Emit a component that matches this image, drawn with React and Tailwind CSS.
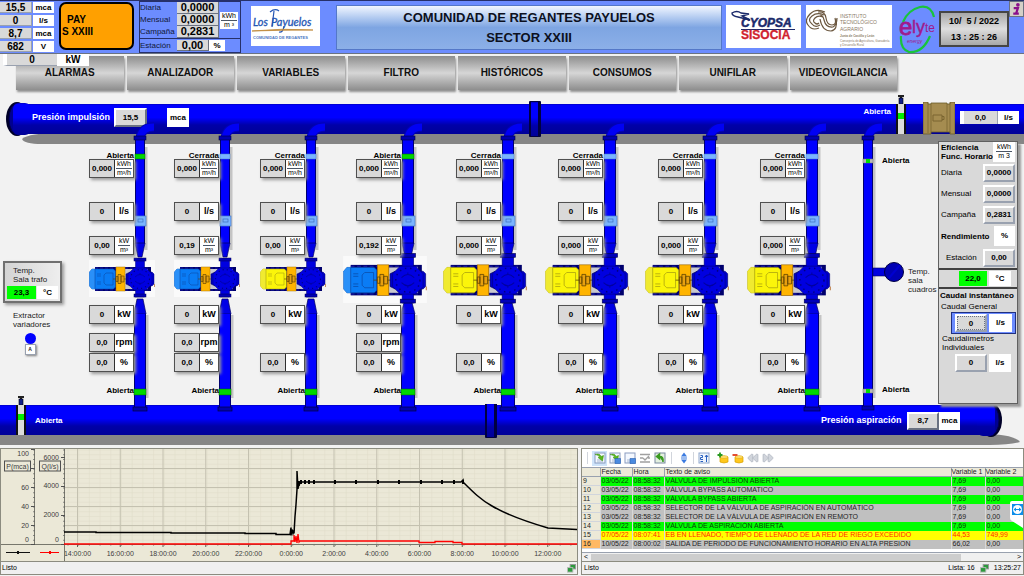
import React from 'react';
import { Rewind, FastForward } from 'lucide-react';

const NAV = ['ALARMAS', 'ANALIZADOR', 'VARIABLES', 'FILTRO', 'HISTÓRICOS', 'CONSUMOS', 'UNIFILAR', 'VIDEOVIGILANCIA'];

const PUMPS = [
  { valve: 'Abierta', energy: '0,000', ratio: '0,00', rpm: '0,0', running: true },
  { valve: 'Cerrada', energy: '0,000', ratio: '0,19', rpm: '0,0', running: true },
  { valve: 'Cerrada', energy: '0,000', ratio: '0,00' },
  { valve: 'Abierta', energy: '0,000', ratio: '0,192', rpm: '0,0', running: true, large: true },
  { valve: 'Cerrada', energy: '0,000', ratio: '0,000', large: true },
  { valve: 'Cerrada', energy: '0,000', ratio: '0,000', large: true },
  { valve: 'Cerrada', energy: '0,000', ratio: '0,000', large: true },
  { valve: 'Cerrada', energy: '0,000', ratio: '0,000', large: true },
];

const ALARMS = [
  [9, '03/05/22', '08:58:32', 'VÁLVULA DE IMPULSIÓN ABIERTA', '7,69', '0,00', 'green'],
  [10, '03/05/22', '08:58:32', 'VÁLVULA BYPASS AUTOMATICO', '7,69', '0,00', 'gray'],
  [11, '03/05/22', '08:58:32', 'VÁLVULA BYPASS ABIERTA', '7,69', '0,00', 'green'],
  [12, '03/05/22', '08:58:32', 'SELECTOR DE LA VÁLVULA DE ASPIRACIÓN EN AUTOMÁTICO', '7,69', '0,00', 'gray'],
  [13, '03/05/22', '08:58:32', 'SELECTOR DE LA VÁLVULA DE ASPIRACIÓN EN REMOTO', '7,69', '0,00', 'gray'],
  [14, '03/05/22', '08:58:32', 'VÁLVULA DE ASPIRACIÓN ABIERTA', '7,69', '0,00', 'green'],
  [15, '07/05/22', '08:07:41', 'EB EN LLENADO, TIEMPO DE LLENADO DE LA RED DE RIEGO EXCEDIDO', '44,53', '749,99', 'yellow'],
  [16, '10/05/22', '08:00:02', 'SALIDA DE PERIODO DE FUNCIONAMIENTO HORARIO EN ALTA PRESION', '66,02', '0,00', 'gray'],
];

const ROW_COLORS = {
  green: 'bg-[#00ff00] text-[#083c08]',
  gray: 'bg-[#c0c0c0] text-[#222222]',
  yellow: 'bg-[#ffff00] text-[#ff2a00]',
};

function Fraction({ top, bottom }) {
  return (
    <span className="flex flex-col items-center text-[7px] leading-[8px] font-normal">
      <span className="border-b border-gray-600 px-px">{top}</span>
      <span>{bottom}</span>
    </span>
  );
}

/* ---------- Header ---------- */

function HeaderReadouts() {
  const rows = [['15,5', 'mca'], ['0', 'l/s'], ['8,7', 'mca'], ['682', 'V']];
  return (
    <div className="flex flex-col gap-[2px] w-[54px]">
      {rows.map(([value, unit], i) => (
        <div key={i} className="flex gap-px h-[11px] font-bold">
          <output className="w-8 bg-[#d9d9d9] border-r border-b border-gray-400 text-[10px] leading-[11px] text-center">{value}</output>
          <span className="grow bg-white text-[8px] leading-[11px] text-center">{unit}</span>
        </div>
      ))}
    </div>
  );
}

function EnergyTable() {
  const rows = [['Diaria', '0,0000'], ['Mensual', '0,0000'], ['Campaña', '0,2831']];
  return (
    <div className="ml-[5px] w-[102px] flex flex-col">
      <div className="flex items-center h-[38px] border border-[#26306a]">
        <div className="flex flex-col">
          {rows.map(([label, value]) => (
            <div key={label} className="flex h-3">
              <span className="w-[37px] text-[8px] leading-3 text-[#101838]">{label}</span>
              <output className="w-[42px] bg-[#d9d9d9] border-r border-b border-gray-500 text-[11px] leading-[11px] font-bold text-center">{value}</output>
            </div>
          ))}
        </div>
        <span className="ml-px bg-white w-[18px]"><Fraction top="kWh" bottom="m ³" /></span>
      </div>
      <div className="flex items-center h-[14px] border border-t-0 border-[#26306a]">
        <span className="w-[37px] text-[8px] text-[#101838]">Estación</span>
        <output className="w-8 h-[11px] bg-[#d9d9d9] border-r border-b border-gray-500 text-[11px] leading-[11px] font-bold text-center">0,00</output>
        <span className="w-4 h-[11px] bg-white text-[8px] leading-[11px] font-bold text-center">%</span>
      </div>
    </div>
  );
}

function PayuelosLogo() {
  return (
    <svg viewBox="0 0 69 40" className="ml-2.5 mt-[5px] w-[69px] h-10 shrink-0 bg-white" aria-label="Los Payuelos">
      <g fontFamily="Lato" fontStyle="italic" fill="#2456b4" stroke="#2456b4" strokeWidth=".3">
        <text x="2" y="20" fontSize="11">Los</text>
        <text x="20" y="20" fontSize="11">Payuelos</text>
      </g>
      <path d="M19 6q5-4 9-1M23 5l-2 16M33 20q-1 7-5 6" fill="none" stroke="#2456b4" strokeWidth="1.2" />
      <path d="M1 25q30-3 61-1q-30 0-61 1" fill="#c08a3c" stroke="#c08a3c" strokeWidth=".8" />
      <text x="2" y="33" fontFamily="Liberation Sans" fontSize="4" fontWeight="bold" fill="#4a78c4">COMUNIDAD DE REGANTES</text>
    </svg>
  );
}

function CyopsaLogo() {
  return (
    <svg viewBox="0 0 75 43" className="w-[75px] h-[43px] shrink-0 bg-white" aria-label="Cyopsa Sisocia">
      <path d="M6 8q5-3 9 0l8 1-7 2 8 4-12-3q-6-1-6-4Z" fill="none" stroke="#1b2a6b" strokeWidth="1.4" />
      <text x="15" y="22" fontFamily="Liberation Sans" fontSize="12" fontWeight="bold" fontStyle="italic" fill="#1b2a6b" stroke="#1b2a6b" strokeWidth=".5">CYOPSA</text>
      <path d="M15 24.500h54" stroke="#1b2a6b" strokeWidth="1" />
      <text x="15" y="34" fontFamily="Liberation Sans" fontSize="12" fontWeight="bold" fill="#d0222e" stroke="#d0222e" strokeWidth=".3">SISOCIA</text>
    </svg>
  );
}

function ItaLogo() {
  return (
    <svg viewBox="0 0 86 43" className="ml-[5px] w-[86px] h-[43px] shrink-0 bg-white" aria-label="Instituto Tecnológico Agrario">
      <g fill="none" stroke="#6b573f" strokeWidth="1.2">
        <path d="M19 7Q10 3 4 9T2 20q4 6 11 3" />
        <path d="M18 10Q11 7 6 11t0 8q3 4 8 1" />
        <path d="M17 12q-5-2-8 1t0 5q2 2 4 0" />
        <path d="M12 7q7-1 8 6t6 7 3-7" />
        <path d="M14 10q3 0 4 5 2 8 9 7 4-2 4-9" />
        <path d="M14 14q2 12 11 12 7-1 5-12" />
      </g>
      <g fontFamily="Liberation Sans" fill="#8a7a66">
        <text x="34" y="13" fontSize="5">INSTITUTO</text>
        <text x="34" y="19" fontSize="5">TECNOLÓGICO</text>
        <text x="34" y="26" fontSize="5">AGRARIO</text>
        <text x="34" y="32" fontSize="3" fontWeight="bold">Junta de Castilla y León</text>
        <text x="34" y="37" fontSize="3">Consejería de Agricultura, Ganadería</text>
        <text x="34" y="41" fontSize="3">y Desarrollo Rural</text>
      </g>
    </svg>
  );
}

function ElyteLogo() {
  return (
    <svg viewBox="0 0 38 49" className="ml-[7px] w-[38px] h-[49px] shrink-0" aria-label="Elyte">
      <path d="M35 12Q32 0 21 2Q9 5 4 17M2 31q-1 13 8 16q14 1 21-16" fill="none" stroke="#19c43c" strokeWidth="2.2" />
      <text x="0" y="30" fontFamily="Liberation Sans" fontSize="24" fill="#a01a8c" stroke="#a01a8c" strokeWidth=".8">e</text>
      <text x="13" y="28" fontFamily="Liberation Sans" fontSize="18" fill="#a01a8c" stroke="#a01a8c" strokeWidth=".4">ly</text>
      <text x="26" y="27" fontFamily="Liberation Sans" fontSize="12" fill="#a01a8c">te</text>
      <text x="8" y="38" fontFamily="Liberation Sans" fontSize="5" fontStyle="italic" fill="#a01a8c">energy</text>
    </svg>
  );
}

function Header() {
  return (
    <header className="flex h-[54px] border-t border-b border-t-[#26306a] border-b-gray-500 bg-[#6c8cff]">
      <div className="pt-px"><HeaderReadouts /></div>
      <button className="ml-[5px] mt-px h-12 w-[75px] shrink-0 rounded-[7px] border-2 border-black bg-[#ffa000] px-px text-left text-[10px] leading-3 font-bold">
        <span className="block pl-[5px]">PAY</span>
        <span className="block">S XXIII</span>
      </button>
      <EnergyTable />
      <PayuelosLogo />
      <h1 className="ml-4 mt-1 h-[45px] grow border border-[#5478c8] bg-linear-to-b from-[#f2f7ff] via-[#7ea5e2] to-[#8cb0e8] text-center text-[13px] leading-5 font-bold pt-[2px] text-[#0c1020]">
        COMUNIDAD DE REGANTES PAYUELOS<br />SECTOR XXIII
      </h1>
      <div className="flex pl-1 pt-1">
        <CyopsaLogo />
        <ItaLogo />
        <ElyteLogo />
      </div>
      <div className="ml-[2px] mt-[10px] h-9 w-[70px] shrink-0 border-2 border-[#454545] bg-linear-to-b from-[#a8a8a8] via-[#dedede] to-[#a8a8a8] text-center text-[9px] leading-4 font-bold">
        <time className="block whitespace-pre">10/  5 / 2022</time>
        <time className="block">13 : 25 : 26</time>
      </div>
      <button aria-label="Información" className="h-4 w-[15px] shrink-0 border border-gray-500 bg-[#d4d0c8]">
        <svg viewBox="0 0 14 14" className="w-full h-full">
          <circle cx="8.500" cy="2.500" r="2" fill="#8a0f8a" />
          <path d="M4 6h4.500l-2 6h3M3.500 12h3" fill="none" stroke="#8a0f8a" strokeWidth="2.400" />
        </svg>
      </button>
    </header>
  );
}

function Nav() {
  return (
    <nav className="relative grid grid-cols-8 gap-[3px] pl-4 pr-[127px] pt-[2px] pb-[5px]">
      {NAV.map((item) => (
        <button key={item} className="h-[34px] bg-linear-to-b from-[#8e8e8e] via-[#d6d6d6] to-[#8e8e8e] pb-[2px] text-[10px] font-bold text-[#101010] shadow-[1px_2px_2px_#909090]">
          {item}
        </button>
      ))}
      {/* Total power, overlaps the first button */}
      <div className="absolute left-[3px] top-0 flex h-3 text-[10px] leading-3 font-bold text-center">
        <output className="w-[54px] border-l-4 border-b border-l-white border-b-gray-400 bg-[#d9d9d9]">0</output>
        <span className="w-8 bg-white">kW</span>
      </div>
    </nav>
  );
}

/* ---------- Plant mimic ---------- */

function PipeGradient({ id }) {
  return (
    <linearGradient id={id} x1="0" y1="0" x2="0" y2="1">
      <stop offset="0" stopColor="#0000c0" />
      <stop offset="0.05" stopColor="#0000ff" />
      <stop offset="0.45" stopColor="#0000ff" />
      <stop offset="0.7" stopColor="#0000a8" />
      <stop offset="1" stopColor="#000098" />
    </linearGradient>
  );
}

function MainPipe({ id, top, shadowFrom, shadowTo, flange, coupling, start, end }) {
  const left = flange < 512;
  return (
    <svg viewBox="0 0 1024 52" preserveAspectRatio="none" className="absolute inset-x-0 top-0 h-[52px] w-full">
      <defs><PipeGradient id={id} /></defs>
      <path d={`M${shadowFrom} ${top + 35}q6-6 40-6H${shadowTo - 40}q34 0 40 8q-10 3-30 3H${shadowFrom + 20}q-18 0-20-5Z`} fill="#868686" />
      <rect x={start} y={top} width={end - start} height="30" fill={`url(#${id})`} />
      <rect x={coupling} y={top - 3} width="12" height="36" rx="1" fill="#000040" />
      <rect x={coupling + 2} y={top - 2} width="7" height="34" fill={`url(#${id})`} />
      <ellipse cx={flange} cy={top + 15} rx="11" ry="17" fill="#000028" />
      <ellipse cx={left ? flange + 1 : flange - 1} cy={top + 15} rx="9" ry="16" fill="#000090" stroke="#000050" />
      <rect x={left ? flange - 4 : flange - 14} y={top - 1} width="18" height="32" rx="6" fill={`url(#${id})`} />
    </svg>
  );
}

function GateValve() {
  return (
    <svg viewBox="0 0 12 40" className="h-10 w-3 shrink-0">
      <path d="M3 1h6M6 1v3" stroke="#222" strokeWidth="2" />
      <rect x="4" y="3" width="4" height="6" fill="#10208a" stroke="#000" strokeWidth=".6" />
      <rect x="1" y="9" width="10" height="30" fill="#111" />
      <rect x="3" y="9" width="6" height="30" fill="#dcdcdc" />
      <rect x="3" y="18" width="6" height="6" fill="#00f000" />
    </svg>
  );
}

function FlowMeter() {
  return (
    <svg viewBox="0 0 32 33" className="h-[33px] w-8 shrink-0">
      <path d="M0 0h5v2h3v-1h16v1h3v-2h5v32h-5v-2h-19v2h-8Z" fill="#a58c50" stroke="#6b5a2a" strokeWidth=".8" />
      <path d="M5 1v30M8 2v28M24 2v28M27 1v30" stroke="#7a6530" strokeWidth=".8" />
      <path d="M10 13h9v6h-9ZM19 14.500h2v3h-2" fill="none" stroke="#7a6530" />
    </svg>
  );
}

function Pump({ running, x, y, width, height }) {
  const body = running ? '#0a7cf5' : '#fbf50a';
  const cap = running ? '#2a90f8' : '#f0ea30';
  const line = running ? '#0a4ca8' : '#a8a010';
  return (
    <svg x={x} y={y} width={width} height={height} viewBox="0 0 66 37" overflow="visible">
      {running && <rect width="66" height="37" fill="#fafafa" />}
      <rect x="6" y="7" width="56" height="24" fill="#00006c" />
      <rect x="36" y="9" width="10" height="20" fill="#c8c8d0" />
      <rect x="56" y="9" width="3" height="20" fill="#e0e0e8" />
      <path d="M6 8h55M6 30h55" stroke="#1c1cb0" strokeDasharray="3 2" strokeWidth=".8" />
      {/* motor */}
      <path d="M3 9h21.500l2 2v16l-2 2H3l-2.500-3V12Z" fill={body} stroke={line} strokeWidth=".5" />
      <path d="M3 9h3v20H3l-2.500-3V12Z" fill={cap} />
      <path d="M6 9v20M8 14h4M8 16h4M8 22h4M8 24h4M15 15l2-2h7v12h-7l-2-2Z" fill="none" stroke={line} strokeWidth=".6" />
      {/* coupling */}
      <rect x="27" y="7" width="9" height="24" fill="#ffb400" stroke="#b07800" strokeWidth=".5" />
      <path d="M24 19h3M27 16.500h2v5h-2ZM29 14.500h3v9h-3ZM32 16h3v6h-3ZM35 19h4" fill="#e8a010" stroke="#5a4000" strokeWidth=".6" />
      {/* casing */}
      <path d="M37 14l4-2v14l-4-2Z" fill="#0000c8" stroke="#000050" strokeWidth=".5" />
      <rect x="46.500" y="0" width="9" height="37" fill="#0000e0" stroke="#000080" strokeWidth=".5" />
      <path d="M61 12h2l2 2v10l-2 2h-2Z" fill="#0000d0" stroke="#000070" strokeWidth=".5" />
      <rect x="58" y="13" width="4" height="12" fill="#0000d0" />
      <path d="M65.500 24v3" stroke="#b8743a" strokeWidth=".8" />
      <path d="M45 8h12l6 6v10l-6 6H45l-6-6V14Z" fill="#0000e0" stroke="#000080" strokeWidth=".5" />
      <circle cx="51" cy="19" r="9.500" fill="none" stroke="#000080" strokeWidth="1.200" strokeDasharray="1.200 3" />
      <path d="M51 13v1.500M51 23.500v1.500M46 17q5-5 10 0M46 21q5 5 10 0" fill="none" stroke="#0000a0" strokeWidth=".8" />
      <rect x="45" y="-2" width="12" height="3" fill="#0000b8" stroke="#000050" strokeWidth=".5" />
      <rect x="45" y="34" width="12" height="3" fill="#0000b8" stroke="#000050" strokeWidth=".5" />
    </svg>
  );
}

/* Riser from the suction pipe, through the pump, up to the discharge pipe */
function Riser({ large, open, running }) {
  const cx = large ? 52 : 51;
  const r = large ? 6 : 5;
  const low = large ? 7 : 6;
  return (
    <svg viewBox="0 141 80 263" className="absolute left-0 top-0 h-[263px] w-20 overflow-visible">
      <path d={`M${cx + r + 1} 147V250M${cx + low + 1} 315V398`} stroke="#c4c4c4" strokeWidth="3" />
      <path d={`M${cx + 14} 127Q${cx + 2} 127 ${cx} 138`} fill="none" stroke="#0000b8" strokeWidth="9" />
      <path d={`M${cx + 14} 127Q${cx + 2} 127 ${cx} 138`} fill="none" stroke="#0000f4" strokeWidth="7" />
      <rect x={cx - r} y="139" width={r * 2} height="105" fill="#000070" />
      <rect x={cx - r + 1} y="139" width={r * 2 - 2} height="105" fill="#0000ff" />
      <rect x={cx - r - 1} y="136" width={r * 2 + 2} height="4" fill="#0000b0" stroke="#000040" strokeWidth=".6" />
      <path d={`M${cx - r} 243h${r * 2}l-3 14h${6 - r * 2}Z`} fill="#0000e6" stroke="#000060" strokeWidth=".7" />
      <rect x={cx - r} y="154" width={r * 2} height="5" fill={open ? '#00d800' : '#7ab4ff'} stroke={open ? '#006000' : '#4a7cc8'} strokeWidth=".5" />
      <rect x={cx - r} y="216" width={r * 2 + 1} height="10" fill="#7ab4ff" stroke="#4a7cc8" strokeWidth=".7" />
      <rect x={cx - 2} y="219" width="5" height="3" fill="none" stroke="#3c70c0" strokeWidth=".7" />
      <path d={`M${cx - 3} 299h6l${low - 3} 15h${-low * 2}Z`} fill="#0000e6" stroke="#000060" strokeWidth=".7" />
      <rect x={cx - low} y="314" width={low * 2} height="94" fill="#000070" />
      <rect x={cx - low + 1} y="314" width={low * 2 - 2} height="94" fill="#0000ff" />
      <rect x={cx - low} y="389" width={low * 2} height="6" fill="#00d800" stroke="#006000" strokeWidth=".5" />
      <rect x={cx - low - 1} y="407" width={low * 2 + 2} height="4" fill="#0000b0" stroke="#000040" strokeWidth=".7" />
      {large
        ? <Pump running={running} x={-13} y={256} width={84} height={47} />
        : <Pump running={running} x={0} y={260} width={66} height={37} />}
    </svg>
  );
}

function Readout({ value, children }) {
  return (
    <div className="flex h-[19px] border border-[#505050] bg-white text-center font-bold shadow-[2px_2px_3px_#9a9a9a]">
      <output className="w-[25px] border-r border-[#303030] bg-[#d9d9d9] text-[8px] leading-[17px]">{value}</output>
      <span className="grow text-[9px] leading-[17px]">{children}</span>
    </div>
  );
}

function PumpLine({ pump }) {
  return (
    <div className="relative pt-[10px]">
      <Riser large={pump.large} open={pump.valve === 'Abierta'} running={pump.running} />
      <div className="relative flex w-[45px] flex-col">
        <span className="h-2 self-end text-[8px] leading-[9px] font-bold">{pump.valve}</span>
        <Readout value={pump.energy}><Fraction top="kWh" bottom="m³/h" /></Readout>
        <div className="mt-6"><Readout value="0">l/s</Readout></div>
        <div className="mt-[15px]"><Readout value={pump.ratio}><Fraction top="kW" bottom="m³" /></Readout></div>
        <div className="mt-[50px]"><Readout value="0">kW</Readout></div>
        <div className="mt-[9px] h-[19px]">{pump.rpm && <Readout value={pump.rpm}>rpm</Readout>}</div>
        <div className="mt-px"><Readout value="0,0">%</Readout></div>
        <span className="mt-[14px] h-2 self-end text-[8px] leading-[9px] font-bold">Abierta</span>
      </div>
    </div>
  );
}

function TransformerRoom() {
  return (
    <div className="flex flex-col pl-[3px] pt-[120px] text-[8px] leading-[9px] text-[#222222]">
      <div className="w-[59px] border-2 border-[#707070] bg-linear-to-r from-[#d4d4d4] to-[#eeeeee] px-[2px] pb-[2px] pt-[3px] shadow-[2px_2px_3px_#9a9a9a]">
        <p className="pl-[6px]">Temp.<br />Sala trafo</p>
        <div className="mt-[2px] flex h-[13px] gap-px text-center leading-[13px] font-bold text-black">
          <output className="w-[29px] bg-[#00ff00]">23,3</output>
          <span className="grow bg-white">°C</span>
        </div>
      </div>
      <p className="mt-2 pl-[10px]">Extractor<br />variadores</p>
      <div className="flex w-[54px] flex-col items-center pt-1">
        <span className="h-[11px] w-[11px] rounded-full bg-[#0000ff]"></span>
        <button className="h-[11px] w-[11px] border border-gray-400 bg-white text-[5px] leading-[9px] font-bold shadow-[1px_1px_2px_#808080]">A</button>
      </div>
    </div>
  );
}

function Bypass() {
  return (
    <div className="relative pt-[15px] text-[8px] leading-[9px]">
      <svg viewBox="0 141 78 263" className="absolute left-0 top-0 h-[263px] w-[78px] overflow-visible">
        <path d="M14 147V398" stroke="#c4c4c4" strokeWidth="3" />
        <path d="M22 127Q10 127 8 138" fill="none" stroke="#0000b8" strokeWidth="9" />
        <path d="M22 127Q10 127 8 138" fill="none" stroke="#0000f4" strokeWidth="7" />
        <rect x="3" y="139" width="10" height="269" fill="#000070" />
        <rect x="4" y="139" width="8" height="269" fill="#0000ff" />
        <rect x="2" y="136" width="12" height="4" fill="#0000b0" stroke="#000040" strokeWidth=".6" />
        <rect x="2" y="406" width="12" height="4" fill="#0000b0" stroke="#000040" strokeWidth=".6" />
        <rect x="13" y="268" width="14" height="8" fill="#0000e0" stroke="#000060" strokeWidth=".6" />
        <circle cx="34" cy="272" r="9.500" fill="#0000b4" stroke="#000040" />
        <path d="M29 278L40 265" stroke="#0000d0" strokeWidth="2" />
        {[159, 389].map((y) => (
          <g key={y}>
            <rect x="3" y={y} width="10" height="4" fill="#b8b8b8" stroke="#707070" strokeWidth=".5" />
            <rect x="6" y={y} width="4" height="4" fill="#00e000" />
          </g>
        ))}
      </svg>
      <p className="relative pl-[22px] font-bold">Abierta</p>
      <p className="relative mt-[102px] pl-[48px] text-[#222222]">Temp.<br />sala<br />cuadros</p>
      <p className="relative mt-[91px] pl-[22px] font-bold">Abierta</p>
    </div>
  );
}

function PanelValue({ children }) {
  return (
    <output className="block h-[18px] w-8 border-2 border-t-white border-l-white border-r-gray-400 border-b-gray-400 bg-[#d9d9d9] text-center text-[8px] leading-[14px] font-bold">
      {children}
    </output>
  );
}

function EfficiencyPanel() {
  const rows = [['Diaria', '0,0000'], ['Mensual', '0,0000'], ['Campaña', '0,2831']];
  return (
    <aside className="h-[263px] border border-[#606060] bg-[#d9d9d9] text-[8px] leading-[9px] shadow-[3px_3px_2px_#9a9a9a]">
      <div className="flex h-5 items-start">
        <h2 className="w-[53px] whitespace-nowrap pl-[2px] pt-px font-bold">Eficiencia<br />Func. Horario</h2>
        <span className="relative ml-px h-5 w-[22px] bg-white pt-px"><Fraction top="kWh" bottom="m 3" /></span>
      </div>
      {rows.map(([label, value]) => (
        <div key={label} className="flex h-[21px] items-center justify-between pl-[2px] pr-[2px]">
          <span>{label}</span>
          <PanelValue>{value}</PanelValue>
        </div>
      ))}
      <div className="flex h-[22px] items-center justify-between pl-[2px] pr-[2px] font-bold">
        <h2>Rendimiento</h2>
        <span className="h-5 w-[21px] bg-white text-center leading-5">%</span>
      </div>
      <div className="flex h-[23px] items-center justify-between border-b-2 border-[#404040] pl-[7px] pr-[2px]">
        <span>Estación</span>
        <PanelValue>0,00</PanelValue>
      </div>
      <div className="flex h-[19px] items-center gap-[2px] border-b-2 border-[#404040] pl-5 text-center leading-[15px] font-bold">
        <output className="h-[15px] w-7 bg-[#00ff00]">22,0</output>
        <span className="h-[15px] w-[22px] bg-white">°C</span>
      </div>
      <h2 className="whitespace-nowrap pl-px pt-[2px] font-bold">Caudal instantáneo</h2>
      <p className="pl-[2px] pt-[2px]">Caudal General</p>
      <div className="ml-3 mt-px flex h-[22px] w-[65px] items-center gap-[2px] border border-[#203080] bg-[#6c8cff] px-[3px] font-bold">
        <button className="h-[18px] w-8 border-2 border-t-white border-l-white border-r-gray-400 border-b-gray-400 bg-[#d9d9d9] text-center outline-1 -outline-offset-3 outline-dotted outline-gray-500">0</button>
        <span className="h-[18px] grow bg-white text-center leading-[18px]">l/s</span>
      </div>
      <p className="pl-[3px]">Caudalímetros<br />Individuales</p>
      <div className="ml-4 mt-[2px] flex gap-[2px] font-bold">
        <PanelValue>0</PanelValue>
        <span className="h-[18px] w-[22px] bg-white text-center leading-[18px]">l/s</span>
      </div>
    </aside>
  );
}

function Plant() {
  return (
    <main className="text-[8px]">
      <div className="relative flex h-[46px] items-start">
        <MainPipe id="discharge" top={9} start={20} end={1024} shadowFrom={22} shadowTo={1070} flange={17} coupling={529} />
        <div className="relative flex grow items-center pl-8 pt-[13px] font-bold">
          <span className="w-[82px] text-[9px] whitespace-nowrap text-white">Presión impulsión</span>
          <output className="h-[19px] w-[33px] border-2 border-t-white border-l-white border-r-gray-500 border-b-gray-500 bg-[#d9d9d9] text-center leading-[15px]">15,5</output>
          <span className="ml-5 h-[19px] w-[22px] bg-white text-center leading-[19px]">mca</span>
        </div>
        <span className="relative mt-3 leading-[10px] font-bold text-white">Abierta</span>
        <div className="relative ml-[4px]"><GateValve /></div>
        <div className="relative ml-[16px] mt-[7px]"><FlowMeter /></div>
        <div className="relative ml-[5px] mr-[5px] mt-4 flex h-[13px] bg-white text-center leading-[13px] font-bold">
          <output className="w-[38px] border-l-4 border-r border-l-white border-r-gray-400 bg-[#d9d9d9]">0,0</output>
          <span className="w-[21px]">l/s</span>
        </div>
      </div>

      <div className="relative z-10 grid h-[263px] grid-cols-[89fr_85fr_86fr_96fr_100fr_102fr_100fr_102fr_100fr_78fr_80fr_6fr]">
        <TransformerRoom />
        {PUMPS.map((pump, i) => <PumpLine key={i} pump={pump} />)}
        <Bypass />
        <EfficiencyPanel />
      </div>

      <div className="relative flex h-[43px] items-start font-bold">
        <MainPipe id="suction" top={1} start={0} end={992} shadowFrom={-60} shadowTo={1020} flange={991} coupling={485} />
        <div className="relative z-10 -mt-2 ml-[15px]"><GateValve /></div>
        <span className="relative ml-2 mt-3 leading-[10px] text-white">Abierta</span>
        <div className="relative ml-auto mr-16 mt-2 flex items-center text-white">
          <span className="w-[86px] text-[9px] whitespace-nowrap">Presión aspiración</span>
          <output className="h-[18px] w-8 border-2 border-t-white border-l-white border-r-gray-500 border-b-gray-500 bg-[#d9d9d9] text-center leading-[14px] text-black">8,7</output>
          <span className="h-[18px] w-[21px] bg-white text-center leading-[18px] text-black">mca</span>
        </div>
      </div>
    </main>
  );
}

/* ---------- Trend and alarm log ---------- */

function LinkIcon() {
  return (
    <svg viewBox="0 0 10 10" className="h-[9px] w-[9px]">
      <rect x="3.500" y=".5" width="6" height="5" fill="#2c9a3c" stroke="#999" />
      <rect x=".5" y="4" width="6" height="5" fill="#2c9a3c" stroke="#bbb" />
    </svg>
  );
}

const HOURS = ['14:00:00', '16:00:00', '18:00:00', '20:00:00', '22:00:00', '0:00:00', '2:00:00', '4:00:00', '6:00:00', '8:00:00', '10:00:00', '12:00:00'];

function TrendChart() {
  const minorX = Array.from({ length: 48 }, (_, i) => 67 + i * 10.7);
  const minorY = Array.from({ length: 20 }, (_, i) => 1 + i * 4.75);
  return (
    <section className="border border-[#8c8c80] bg-[#ebe8d7]">
      <svg viewBox="0 0 576 112" className="block w-full" fontFamily="Liberation Sans" fontSize="7" fill="#404040">
        {minorX.map((x) => <path key={x} d={`M${x} 0V95`} stroke="#e0ddcb" strokeWidth=".6" />)}
        {minorY.map((y) => <path key={y} d={`M63 ${y}H576`} stroke="#e0ddcb" strokeWidth=".6" />)}
        {[19, 38, 57, 76].map((y) => <path key={y} d={`M63 ${y}.5H576`} stroke="#c4c1b0" />)}
        {HOURS.map((h, i) => (
          <g key={h}>
            <path d={`M${76.5 + i * 42.75} 0V95`} stroke="#c4c1b0" />
            <path d={`M${76.5 + i * 42.75} 95v3`} stroke="#606058" />
            <text x={76.5 + i * 42.75} y="107" textAnchor="middle">{h}</text>
          </g>
        ))}
        {minorX.map((x) => <path key={x} d={`M${x} 95v2`} stroke="#808078" strokeWidth=".6" />)}
        <path d="M0 95.500H576M63.500 0V112M33.500 0V95" stroke="#77776c" />
        {[0, 19, 38, 57, 76, 95].map((y) => <path key={y} d={`M30 ${y}.5h4`} stroke="#505050" />)}
        {[8, 37, 66, 95].map((y) => <path key={y} d={`M60 ${y}.5h4`} stroke="#505050" />)}
        {minorY.map((y) => <path key={y} d={`M32 ${y}h2M62 ${y}h2`} stroke="#606060" strokeWidth=".7" />)}
        <g textAnchor="end">
          <text x="28" y="7">100</text>
          <text x="28" y="41">60</text>
          <text x="28" y="60">40</text>
          <text x="28" y="79">20</text>
          <text x="28" y="93">0</text>
          <text x="58" y="11">6000</text>
          <text x="58" y="39">4000</text>
          <text x="58" y="68">2000</text>
          <text x="58" y="93">0</text>
        </g>
        <rect x="3.500" y="12" width="26" height="10" fill="#ebe8d7" stroke="#505050" />
        <rect x="38.500" y="12" width="21" height="10" fill="#ebe8d7" stroke="#505050" />
        <text x="16.500" y="19.500" textAnchor="middle">P(mca)</text>
        <text x="49" y="19.500" textAnchor="middle">Q(l/s)</text>
        <path d="M5 103.500h24" stroke="#111" />
        <path d="M39 103.500h19" stroke="#f00" />
        <path d="M17 102v3" stroke="#111" strokeWidth="2" />
        <path d="M49 102v3" stroke="#f00" strokeWidth="2" />
        {/* flow */}
        <path d="M63 95H290V92h3v-6l1 7 1-6 1 7 1-9 1 8 1-1H418V93.500H434V92.500H452V93.500H461V95H576" fill="none" stroke="#f00" strokeWidth="1.300" />
        {/* pressure */}
        <path d="M63 83H95V83.500H170V84H244V84.500H275V85.500H289l1-7v8l1-6 1 4 1-3v3l1-17 1-12 1-15V22l1 18 1-8v5l1-4H460l2-2v2C472 43 480 51 491 57C508 67 530 74 547 79L576 80.500" fill="none" stroke="#000" strokeWidth="1.500" />
        {[299, 303, 307, 312, 333, 354, 376, 397, 419, 440, 452, 461].map((x) => (
          <rect key={x} x={x} y="31" width="2" height="4" fill="#000" />
        ))}
      </svg>
      <footer className="flex h-[13px] items-center justify-between border-t border-[#8c8c80] bg-[#f0f0f0] px-px text-[7px]">
        <span>Listo</span>
        <LinkIcon />
      </footer>
    </section>
  );
}

function Page({ arrow, badge }) {
  return (
    <svg viewBox="0 0 12 12" className="h-3 w-3">
      <rect x="1" y="1" width="10" height="10" fill="#f4f8ff" stroke="#8a9cc0" />
      <path d="M3 8h6M3 10h6" stroke="#a8b8d0" />
      {arrow && <path d="M1 2.500Q6 1 7 4.500L9.500 3.500L8.500 9L4 5.500L5.500 5Q5 3 1 2.500Z" fill="#58b81c" stroke="#3a9010" strokeWidth=".5" />}
      {badge && <path d="M6 6.500h5.500v5H6Z" fill="#4a8ae0" stroke="#2860b0" strokeWidth=".6" />}
    </svg>
  );
}

function Barrel({ mark }) {
  return (
    <svg viewBox="0 0 12 12" className="h-3 w-3">
      <path d="M3 5q4-2 8 0v5q-4 2-8 0Z" fill="#ffc81e" stroke="#d8a000" strokeWidth=".7" />
      <ellipse cx="7" cy="5" rx="4" ry="1.300" fill="#ffe27a" stroke="#d8a000" strokeWidth=".5" />
      <path d={mark === 'add' ? 'M.5 3h5M3 .5v5' : 'M.5 3h5'} stroke={mark === 'add' ? '#2a9a20' : '#e03a1a'} strokeWidth="1.800" />
    </svg>
  );
}

function Toolbar() {
  const button = 'flex h-[15px] w-[15px] items-center justify-center';
  return (
    <div className="flex h-[18px] items-center bg-white pl-[5px] pr-2">
      <span className="mr-1 h-3 w-px bg-gray-300"></span>
      <button aria-label="Lista de avisos" className="flex h-[15px] w-[15px] items-center justify-center bg-[#cfe4fa]"><Page arrow /></button>
      <button aria-label="Archivo corto" className={button}><Page arrow badge /></button>
      <button aria-label="Archivo largo" className={button}><Page badge /></button>
      <button aria-label="Acusar" className={button}>
        <svg viewBox="0 0 12 12" className="h-3 w-3"><path d="M1 2.500h10M1 6h3M9 6h2M1 10h10M4 6l2 2 4-4" fill="none" stroke="#a0a0a0" strokeWidth="1.300" /></svg>
      </button>
      <button aria-label="Volver" className={button}>
        <svg viewBox="0 0 12 12" className="h-3 w-3">
          <rect x="1" y="1" width="10" height="10" fill="#e4f0e0" stroke="#7a8aa0" />
          <path d="M9 10Q10 4 5 4.500M5.500 2L2.500 4.500l3 2.500Z" fill="#3a9a20" stroke="#3a9a20" strokeWidth="1.500" />
        </svg>
      </button>
      <span className="mx-1 h-3 w-px bg-gray-300"></span>
      <button aria-label="Desplazar" className={button}>
        <svg viewBox="0 0 12 12" className="h-3 w-3"><path d="M6 .5l3 4H3ZM6 11.500l3-4H3Z" fill="#3a7ae0" /><path d="M3 6h6" stroke="#3a7ae0" /></svg>
      </button>
      <span className="mx-[2px] h-3 w-px bg-gray-300"></span>
      <button aria-label="Ordenar" className={button}>
        <svg viewBox="0 0 12 12" className="h-3 w-3">
          <rect x="1" y="1" width="10" height="10" fill="#f0f5fd" stroke="#90a8cc" />
          <path d="M2.500 3.500h2v2h-2v2h2.500M2.500 9.500h2.500M8.500 10V3M7 5l1.500-2L10 5" fill="none" stroke="#2860c0" />
        </svg>
      </button>
      <span className="w-1"></span>
      <button aria-label="Activar aviso" className={button}><Barrel mark="add" /></button>
      <button aria-label="Desactivar aviso" className={button}><Barrel /></button>
      <button aria-label="Anterior" className={button}><Rewind className="h-3 w-3 fill-gray-300 text-gray-400" strokeWidth={1} /></button>
      <button aria-label="Siguiente" className={button}><FastForward className="h-3 w-3 fill-gray-300 text-gray-400" strokeWidth={1} /></button>
    </div>
  );
}

function AlarmLog() {
  return (
    <section className="relative flex flex-col border border-[#8c8c80] bg-white text-[7px]">
      <Toolbar />
      <table className="w-full table-fixed border-collapse text-left leading-[8px]">
        <colgroup>
          <col className="w-[18px]" />
          <col className="w-8" />
          <col className="w-8" />
          <col />
          <col className="w-[34px]" />
          <col className="w-[38px]" />
        </colgroup>
        <thead>
          <tr className="h-[9px] border-y border-gray-400 bg-[#ece9d8] text-[#222222]">
            <th></th>
            <th className="border-l border-gray-400 px-px font-normal">Fecha</th>
            <th className="border-l border-gray-400 px-px font-normal">Hora</th>
            <th className="border-l border-gray-400 px-px font-normal">Texto de aviso</th>
            <th className="border-l border-gray-400 font-normal whitespace-nowrap">Variable 1</th>
            <th className="border-l border-gray-400 font-normal whitespace-nowrap">Variable 2</th>
          </tr>
        </thead>
        <tbody>
          {ALARMS.map(([n, date, time, text, v1, v2, color]) => (
            <tr key={n} className={ROW_COLORS[color]}>
              <td className={n === 16 ? 'h-[9px] border-b border-gray-300 bg-[#ffb964] px-px text-[#222222]' : 'h-[9px] border-b border-gray-300 bg-[#ece9d8] px-px text-[#222222]'}>{n}</td>
              <td className="border-l border-[#d8d8d8] px-px">{date}</td>
              <td className="border-l border-[#d8d8d8] px-px">{time}</td>
              <td className="overflow-hidden border-l border-[#d8d8d8] px-px whitespace-nowrap">{text}</td>
              <td className="border-l border-[#d8d8d8] px-px">{v1}</td>
              <td className="border-l border-[#d8d8d8] px-px">{v2}</td>
            </tr>
          ))}
        </tbody>
      </table>
      <div className="mt-auto flex h-[9px] items-center gap-[3px] border-t border-gray-400 bg-[#f0f0f0] px-[2px] leading-[8px]">
        <span>&lt;</span>
        <span className="h-[7px] w-[370px] bg-[#cdcdcd]"></span>
        <span className="ml-auto">&gt;</span>
      </div>
      <footer className="flex h-[13px] items-center gap-[5px] border-t border-[#8c8c80] bg-[#f0f0f0] px-[2px]">
        <span className="grow">Listo</span>
        <span>Lista: 16</span>
        <LinkIcon />
        <span>13:25:27</span>
      </footer>
      {/* Remote session tab */}
      <button aria-label="Sesión remota" className="absolute right-0 top-[52px] h-[27px] w-[13px]">
        <svg viewBox="0 0 13 27" className="h-full w-full">
          <path d="M2 0H13V27L2 20Q0 19 0 17V2Q0 0 2 0Z" fill="#ffffff" />
          <rect x="2" y="3" width="11" height="11" fill="#0e8ee9" />
          <circle cx="7.500" cy="8.500" r="4.500" fill="#ffffff" />
          <path d="M3.500 8.500l2.500-2v1.500h3v-1.500l2.500 2-2.500 2v-1.500h-3v1.500Z" fill="#0e8ee9" />
        </svg>
      </button>
    </section>
  );
}

export default function App() {
  return (
    <div className="bg-[#f2f2f2] font-['Liberation_Sans',sans-serif] text-black">
      <Header />
      <Nav />
      <Plant />
      <div className="grid grid-cols-[578fr_443fr] gap-[3px] pt-px pb-[2px]">
        <TrendChart />
        <AlarmLog />
      </div>
    </div>
  );
}
